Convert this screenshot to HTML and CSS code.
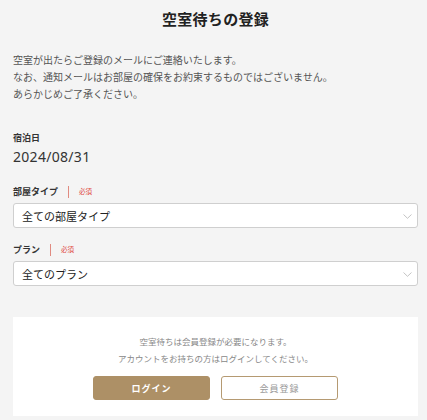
FILE: index.html
```html
<!DOCTYPE html>
<html lang="ja">
<head>
  <meta charset="UTF-8">
  <meta name="viewport" content="width=device-width, initial-scale=1.0">
  <title>空室待ちの登録</title>
  <link rel="stylesheet" href="styles.css">
</head>
<body>
  <div class="page">
    <!-- Heading -->
    <h1 class="page-title">空室待ちの登録</h1>

    <p class="intro">
      空室が出たらご登録のメールにご連絡いたします。<br>
      なお、通知メールはお部屋の確保をお約束するものではございません。<br>
      あらかじめご了承ください。
    </p>

    <!-- Stay date -->
    <div class="field">
      <div class="field-label">宿泊日</div>
      <div class="field-value">2024/08/31</div>
    </div>

    <!-- Room type -->
    <div class="field field-room">
      <label class="field-label" for="room">部屋タイプ<span class="required">必須</span></label>
      <div class="select-wrap">
        <select id="room" name="room">
          <option>全ての部屋タイプ</option>
        </select>
        <svg class="chevron" width="9" height="5" viewBox="0 0 9 5"><path d="M0.5 0.5 L4.5 4.3 L8.5 0.5" fill="none" stroke="#bdbdbd" stroke-width="0.9"/></svg>
      </div>
    </div>

    <!-- Plan -->
    <div class="field field-plan">
      <label class="field-label" for="plan">プラン<span class="required">必須</span></label>
      <div class="select-wrap">
        <select id="plan" name="plan">
          <option>全てのプラン</option>
        </select>
        <svg class="chevron" width="9" height="5" viewBox="0 0 9 5"><path d="M0.5 0.5 L4.5 4.3 L8.5 0.5" fill="none" stroke="#bdbdbd" stroke-width="0.9"/></svg>
      </div>
    </div>

    <!-- Member box -->
    <div class="member-box">
      <p class="member-note">
        空室待ちは会員登録が必要になります。<br>
        アカウントをお持ちの方はログインしてください。
      </p>
      <div class="member-actions">
        <button type="button" class="btn btn-login">ログイン</button>
        <button type="button" class="btn btn-register">会員登録</button>
      </div>
    </div>
  </div>
</body>
</html>
```

FILE: styles.css
```css
/* General */
body {
  margin: 0;
  padding: 0;
  background-color: #f4f4f4;
  font-family: "Noto Sans", "Noto Sans CJK JP", sans-serif;
  color: #333;
}

.page {
  padding: 9px 9px 4px 13px;
}

/* Heading */
.page-title {
  margin: 0;
  font-size: 15px;
  line-height: 20px;
  font-weight: bold;
  text-align: center;
  color: #222;
  letter-spacing: 0.3px;
}

.intro {
  margin: 23px 0 0;
  font-size: 10px;
  line-height: 17px;
  color: #555;
}

/* Fields */
.field {
  margin-top: 28px;
}

.field-label {
  display: flex;
  align-items: center;
  font-size: 9px;
  line-height: 13px;
  font-weight: bold;
  color: #333;
}

.field-value {
  margin-top: 3px;
  font-size: 14px;
  line-height: 20px;
  color: #333;
  letter-spacing: 0.3px;
}

.field-room {
  margin-top: 18px;
}

.field-plan {
  margin-top: 15px;
}

.required {
  display: flex;
  align-items: center;
  font-size: 6.5px;
  font-weight: normal;
  color: #e0463c;
}

.required::before {
  content: "";
  display: block;
  width: 1px;
  height: 12px;
  margin: 0 10px 0 10px;
  background-color: #e08a80;
}

.select-wrap {
  position: relative;
  margin-top: 5px;
}

select {
  display: block;
  width: 100%;
  height: 25px;
  padding: 0 24px 0 8px;
  border: 1px solid #cfcfcf;
  border-radius: 3px;
  background-color: #fff;
  font-family: "Noto Sans CJK JP", sans-serif;
  font-size: 11px;
  color: #222;
  appearance: none;
  -webkit-appearance: none;
  outline: none;
}

.chevron {
  position: absolute;
  right: 6px;
  top: 11px;
  pointer-events: none;
}

/* Member box */
.member-box {
  margin-top: 31px;
  padding: 16px 0 16px;
  background-color: #fff;
  text-align: center;
}

.member-note {
  margin: 0;
  font-family: "Noto Sans CJK JP", sans-serif;
  font-size: 8.5px;
  line-height: 17px;
  color: #888;
}

.member-actions {
  display: flex;
  justify-content: center;
  gap: 11px;
  margin-top: 9px;
}

.btn {
  width: 117px;
  height: 24px;
  padding: 0;
  border-radius: 3px;
  font-family: "Noto Sans CJK JP", sans-serif;
  font-size: 9px;
  letter-spacing: 1px;
  cursor: pointer;
}

.btn-login {
  border: 1px solid #ad9066;
  background-color: #ad9066;
  color: #fff;
  font-weight: bold;
}

.btn-register {
  border: 1px solid #b59a72;
  background-color: #fff;
  color: #999;
}
```
